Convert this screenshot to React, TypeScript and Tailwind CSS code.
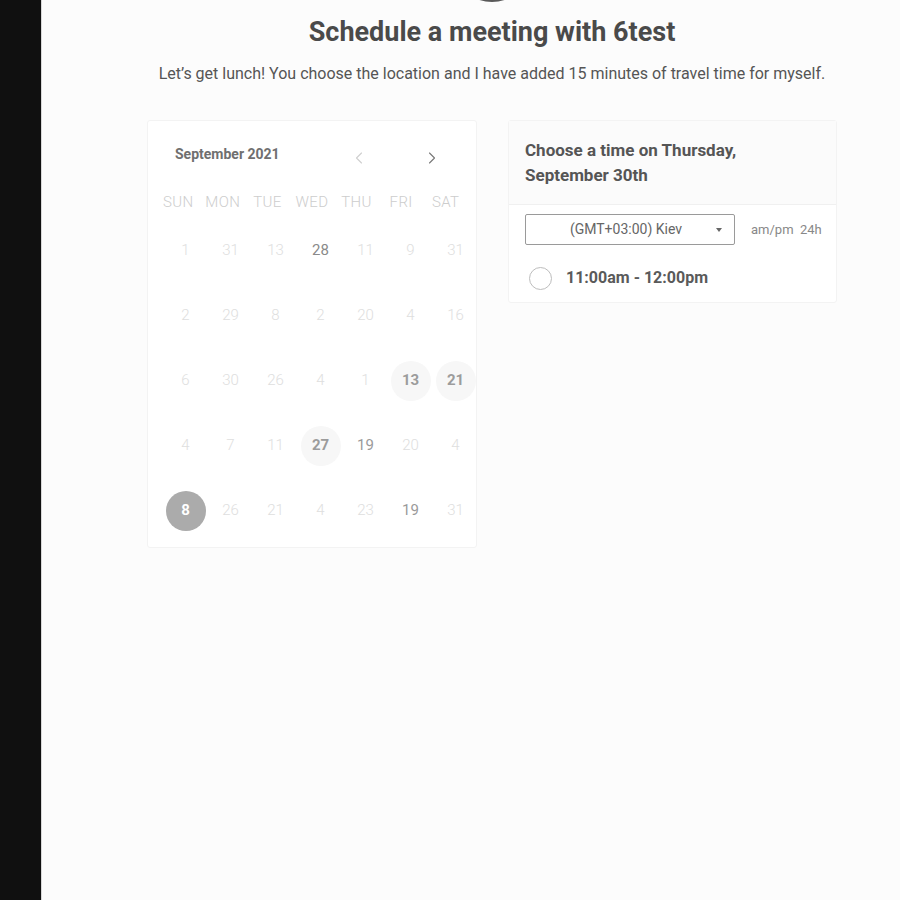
import { ChevronLeft, ChevronRight } from 'lucide-react'

type Day = { n: number; tone: 'faint' | 'mid' | 'strong' | 'avail' | 'selected' }

const weekdays = ['SUN', 'MON', 'TUE', 'WED', 'THU', 'FRI', 'SAT']

const rows: Day[][] = [
  [
    { n: 1, tone: 'faint' },
    { n: 31, tone: 'faint' },
    { n: 13, tone: 'faint' },
    { n: 28, tone: 'strong' },
    { n: 11, tone: 'faint' },
    { n: 9, tone: 'faint' },
    { n: 31, tone: 'faint' },
  ],
  [
    { n: 2, tone: 'faint' },
    { n: 29, tone: 'faint' },
    { n: 8, tone: 'faint' },
    { n: 2, tone: 'faint' },
    { n: 20, tone: 'faint' },
    { n: 4, tone: 'faint' },
    { n: 16, tone: 'faint' },
  ],
  [
    { n: 6, tone: 'faint' },
    { n: 30, tone: 'faint' },
    { n: 26, tone: 'faint' },
    { n: 4, tone: 'faint' },
    { n: 1, tone: 'faint' },
    { n: 13, tone: 'avail' },
    { n: 21, tone: 'avail' },
  ],
  [
    { n: 4, tone: 'faint' },
    { n: 7, tone: 'faint' },
    { n: 11, tone: 'faint' },
    { n: 27, tone: 'avail' },
    { n: 19, tone: 'mid' },
    { n: 20, tone: 'faint' },
    { n: 4, tone: 'faint' },
  ],
  [
    { n: 8, tone: 'selected' },
    { n: 26, tone: 'faint' },
    { n: 21, tone: 'faint' },
    { n: 4, tone: 'faint' },
    { n: 23, tone: 'faint' },
    { n: 19, tone: 'mid' },
    { n: 31, tone: 'faint' },
  ],
]

const toneClass: Record<Day['tone'], string> = {
  faint: 'text-[#dedede] font-light',
  mid: 'text-[#9a9a9a] font-normal',
  strong: 'text-[#8a8a8a] font-normal',
  avail: 'text-[#9c9c9c] font-bold bg-[#f7f7f7]',
  selected: 'text-white font-bold bg-[#ababab]',
}

function Calendar() {
  return (
    <div className="w-[330px] bg-white border border-[#f3f3f3] rounded-[3px] overflow-hidden pt-[16px] pb-[4px]">
      {/* month header */}
      <div className="h-[34px] flex items-center pl-[27px]">
        <span className="text-[14px] font-bold text-[#6f6f6f] w-[170px]">September 2021</span>
        <ChevronLeft size={20} strokeWidth={1.3} className="text-[#cfcfcf] mt-[8px] ml-[4px]" />
        <ChevronRight size={20} strokeWidth={1.3} className="text-[#777] mt-[8px] ml-[53px]" />
      </div>

      {/* weekdays */}
      <div className="grid grid-cols-7 w-[312px] ml-[8px] mt-[20px] h-[20px] items-center">
        {weekdays.map((d) => (
          <span key={d} className="text-center text-[15px] font-light text-[#cdcdcd] tracking-[0.4px]">
            {d}
          </span>
        ))}
      </div>

      {/* dates */}
      <div className="mt-[7px] ml-[15px] w-[315px]">
        {rows.map((row, i) => (
          <div key={i} className="grid grid-cols-[repeat(7,45px)] h-[65px] items-center">
            {row.map((d, j) => (
              <div key={j} className="flex items-center justify-center">
                <span
                  className={`w-[40px] h-[40px] rounded-full flex items-center justify-center text-[15px] ${toneClass[d.tone]}`}
                >
                  {d.n}
                </span>
              </div>
            ))}
          </div>
        ))}
      </div>
    </div>
  )
}

function TimePicker() {
  return (
    <div className="w-[329px] bg-white border border-[#f3f3f3] rounded-[3px] self-start pb-[2px]">
      <div className="bg-[#fbfbfb] border-b border-[#f0f0f0] pl-[16px] pt-[17px] pb-[16px]">
        <p className="text-[17px] leading-[25px] font-bold text-[#555]">Choose a time on Thursday,</p>
        <p className="text-[17px] leading-[25px] font-bold text-[#555]">September 30th</p>
      </div>

      <div className="flex items-center pl-[16px] mt-[9px]">
        <div className="w-[210px] h-[31px] border border-[#9a9a9a] rounded-[2px] flex items-center pl-[10px] pr-[12px]">
          <span className="flex-1 text-center text-[14px] text-[#666]">(GMT+03:00) Kiev</span>
          <span className="w-0 h-0 border-l-[3px] border-r-[3px] border-t-[4px] border-l-transparent border-r-transparent border-t-[#666]" />
        </div>
        <span className="ml-[16px] text-[13px] text-[#888] whitespace-pre">am/pm  24h</span>
      </div>

      <div className="flex items-center h-[44px] mt-[11px] pl-[20px]">
        <span className="w-[23px] h-[23px] rounded-full border-[1.5px] border-[#bdbdbd]" />
        <span className="ml-[14px] text-[16px] font-bold text-[#5a5a5a]">11:00am - 12:00pm</span>
      </div>
    </div>
  )
}

export default function App() {
  return (
    <div className="flex h-[900px] w-[900px] overflow-hidden bg-[#fcfcfc] font-['Roboto',sans-serif]">
      {/* left rail */}
      <div className="w-[42px] shrink-0 bg-[#101010] border-r border-[#d8d8d8]" />

      <main className="flex-1">
        <div className="w-[690px] ml-[105px] flex flex-col items-center">
          <div className="w-[80px] h-[80px] rounded-full bg-[#5a5a5a] mt-[-78px]" />
          <h1 className="mt-[14px] text-[27px] leading-[32px] font-bold text-[#4a4a4a]">
            Schedule a meeting with 6test
          </h1>
          <p className="mt-[16px] text-[16px] leading-[20px] text-[#555]">
            Let’s get lunch! You choose the location and I have added 15 minutes of travel time for myself.
          </p>

          <div className="mt-[36px] flex gap-[31px] w-full">
            <Calendar />
            <TimePicker />
          </div>
        </div>
      </main>
    </div>
  )
}
